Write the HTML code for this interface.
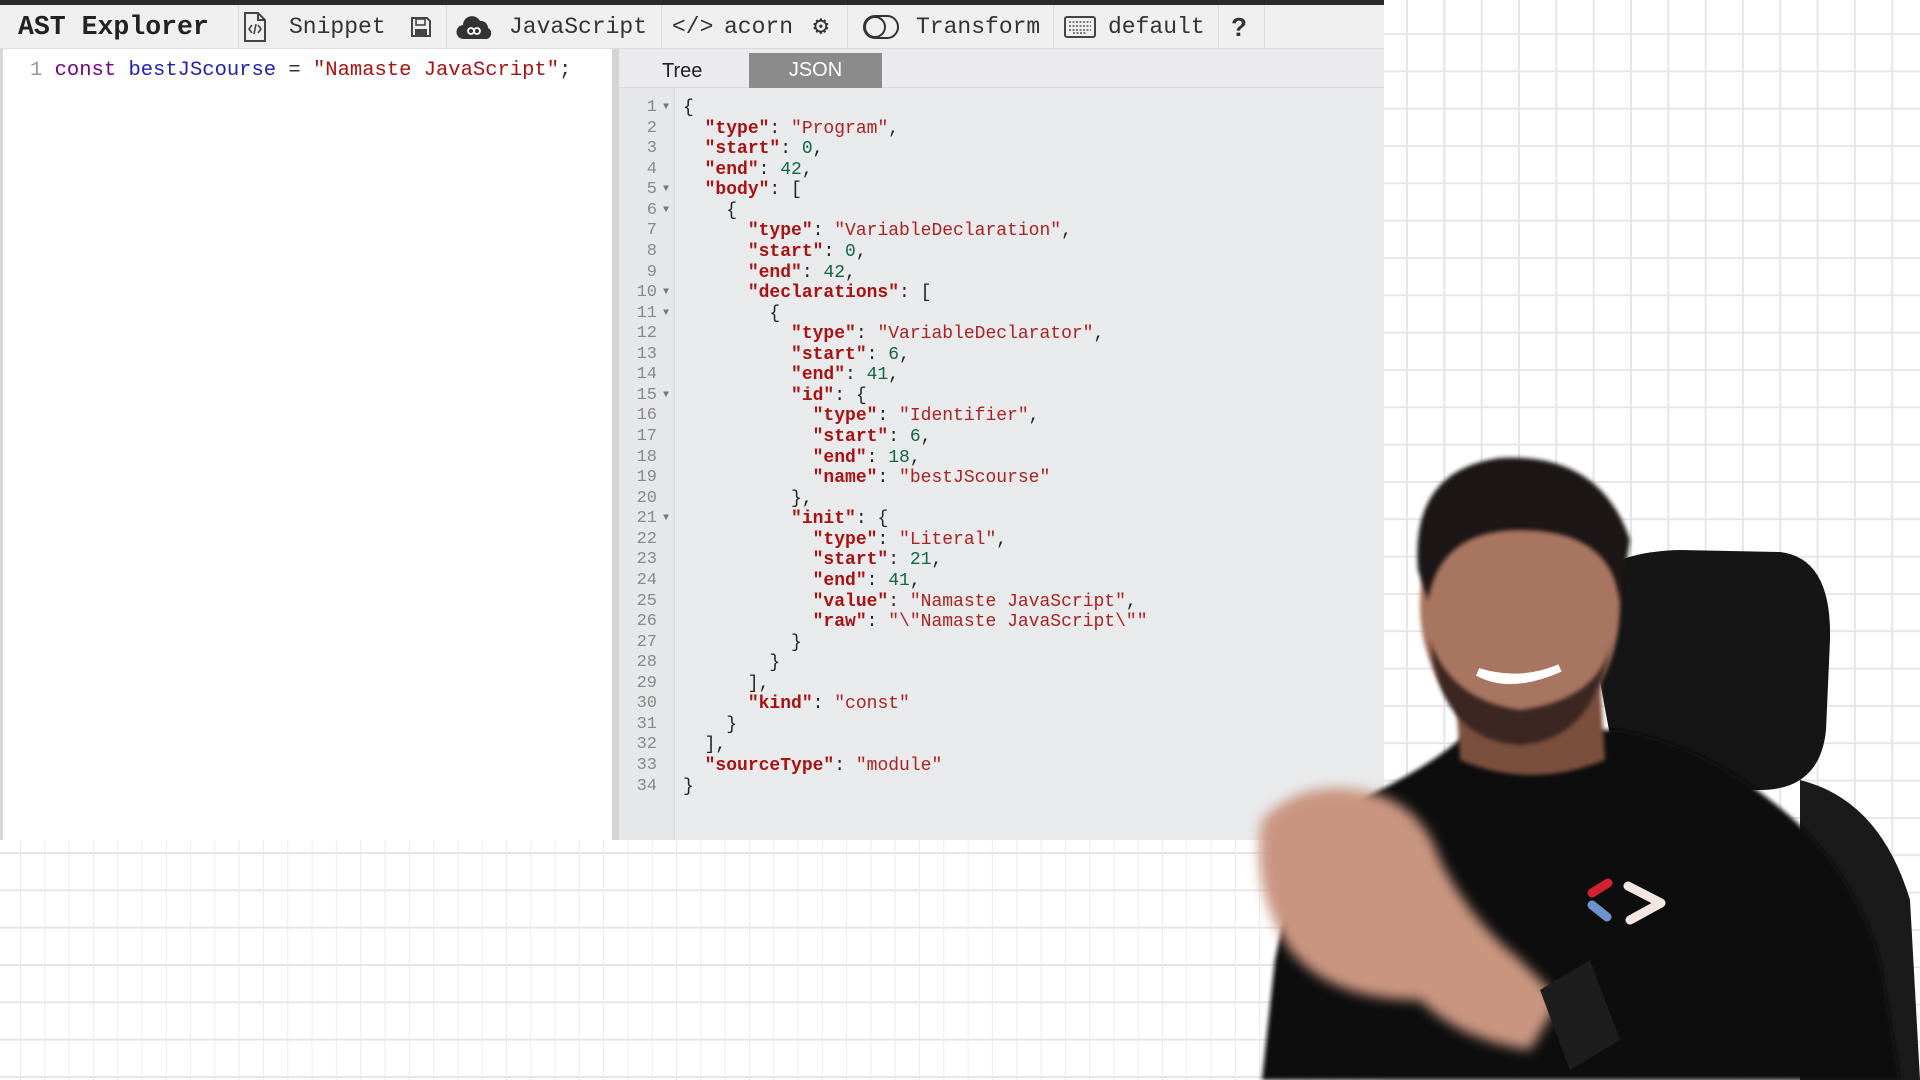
<!DOCTYPE html>
<html><head><meta charset="utf-8"><style>
*{margin:0;padding:0;box-sizing:border-box}
body{width:1920px;height:1080px;overflow:hidden;position:relative;background:#fff;font-family:"Liberation Mono",monospace}
.gridR{position:absolute;left:1384px;top:0;width:536px;height:1080px;
background-image:linear-gradient(to right,#e6e6e8 2px,transparent 2px),linear-gradient(to bottom,#e6e6e8 2px,transparent 2px);
background-size:37.33px 37.33px;background-position:22px 33px}
.gridB{position:absolute;left:0;top:840px;width:1384px;height:240px;
background-image:linear-gradient(to right,#ececee 1px,transparent 1px),linear-gradient(to bottom,#e6e6e8 2px,transparent 2px);
background-size:24.3px 37.33px;background-position:20px 12px}
.topbar{position:absolute;left:0;top:0;width:1384px;height:5px;background:#2c2c2c}
.tool{position:absolute;left:0;top:5px;width:1384px;height:44px;background:#efefef;border-bottom:1px solid #dcdcdc}
.t{position:absolute;top:0;line-height:44px;font-size:23px;color:#333;white-space:nowrap}
.sep{position:absolute;top:0;width:1px;height:44px;background:#dcdcdc}
.editor{position:absolute;left:0;top:49px;width:612px;height:791px;background:#fff;border-left:3px solid #d8d8d8}
.div{position:absolute;left:612px;top:49px;width:7px;height:791px;background:#d4d4d6}
.panel{position:absolute;left:619px;top:49px;width:765px;height:791px;background:#e9eaec}
.tabs{position:absolute;left:0;top:0;width:765px;height:39px;border-bottom:1px solid #dadadc;background:#ebebed}
.json{position:absolute;left:130px;top:4px;width:133px;height:35px;background:#8b8b8b;color:#fff;font-family:"Liberation Sans",sans-serif;font-size:20px;text-align:center;line-height:35px}
.tree{position:absolute;left:43px;top:5px;line-height:35px;font-family:"Liberation Sans",sans-serif;font-size:20px;color:#222}
.gut{position:absolute;left:0;top:39px;width:56px;height:752px;border-right:1px solid #d6d6d8;background:#e6e7e9}
pre{font-family:"Liberation Mono",monospace}
.ln{position:absolute;left:0;top:49px;width:38px;text-align:right;font-size:17px;line-height:20.56px;color:#888}
.ar{position:absolute;left:44px;top:49px;font-size:10px;line-height:20.56px;color:#777}
.code{position:absolute;left:64px;top:49px;font-size:18px;line-height:20.56px;color:#222}
.k{color:#a11;font-weight:bold}.s{color:#a22}.n{color:#164}
</style></head><body>
<div class="gridR"></div>
<div class="gridB"></div>
<div class="topbar"></div>
<div class="tool">
 <div class="t" style="left:18px;font-weight:bold;font-size:26.5px;color:#222">AST Explorer</div>
 <div class="sep" style="left:238px"></div>
 <svg style="position:absolute;left:242px;top:6px" width="26" height="32" viewBox="0 0 26 32"><path d="M3 2h13l7 7v21H3z M16 2v7h7" fill="none" stroke="#444" stroke-width="2"/><path d="M10 14l-3 4 3 4M16 14l3 4-3 4M14 13l-2 10" fill="none" stroke="#444" stroke-width="1.6"/></svg>
 <div class="t" style="left:289px">Snippet</div>
 <svg style="position:absolute;left:410px;top:11px" width="22" height="22" viewBox="0 0 22 22"><path d="M2 2h15l3 3v15H2z" fill="none" stroke="#444" stroke-width="2"/><rect x="6" y="3" width="9" height="6" fill="none" stroke="#444" stroke-width="1.6"/><rect x="5" y="13" width="12" height="6" fill="#444"/></svg>
 <div class="sep" style="left:446px"></div>
 <svg style="position:absolute;left:456px;top:8px" width="38" height="28" viewBox="0 0 38 28"><path d="M8 26a7 7 0 0 1-1-14a9 9 0 0 1 17-4a7 7 0 0 1 8 7a6 6 0 0 1-1 11z" fill="#333"/><path d="M12 18a3 3 0 1 1 6 0a3 3 0 1 1 6 0a3 3 0 1 1-6 0a3 3 0 1 1-6 0" fill="none" stroke="#fff" stroke-width="1.8"/></svg>
 <div class="t" style="left:509px">JavaScript</div>
 <div class="sep" style="left:661px"></div>
 <div class="t" style="left:672px">&lt;/&gt;</div>
 <div class="t" style="left:724px">acorn</div>
 <div class="t" style="left:813px;font-size:26px">&#9881;</div>
 <div class="sep" style="left:847px"></div>
 <svg style="position:absolute;left:862px;top:9px" width="38" height="26" viewBox="0 0 38 26"><rect x="2" y="2" width="34" height="22" rx="11" fill="none" stroke="#333" stroke-width="2"/><circle cx="13" cy="13" r="10" fill="none" stroke="#333" stroke-width="2"/></svg>
 <div class="t" style="left:916px">Transform</div>
 <div class="sep" style="left:1053px"></div>
 <svg style="position:absolute;left:1064px;top:11px" width="32" height="22" viewBox="0 0 32 22"><rect x="1" y="1" width="30" height="20" rx="2" fill="none" stroke="#444" stroke-width="2"/><path d="M5 6h22M5 10h22M5 14h22M9 17h14" stroke="#555" stroke-width="1.5" stroke-dasharray="2 1.5"/></svg>
 <div class="t" style="left:1108px">default</div>
 <div class="sep" style="left:1218px"></div>
 <div class="t" style="left:1231px;font-weight:bold;font-family:'Liberation Sans',sans-serif;font-size:26px">?</div>
 <div class="sep" style="left:1264px"></div>
</div>
<div class="editor">
 <pre style="position:absolute;left:27px;top:10px;font-size:20.5px;line-height:24px;color:#333"><span style="color:#999">1</span> <span style="color:#708">const</span> <span style="color:#22a">bestJScourse</span> = <span style="color:#a11">"Namaste JavaScript"</span>;</pre>
</div>
<div class="div"></div>
<div class="panel">
 <div class="tabs"><div class="tree">Tree</div><div class="json">JSON</div></div>
 <div class="gut"></div>
<pre class="ln">1
2
3
4
5
6
7
8
9
10
11
12
13
14
15
16
17
18
19
20
21
22
23
24
25
26
27
28
29
30
31
32
33
34</pre>
<pre class="ar">▼



▼
▼



▼
▼



▼





▼</pre>
<pre class="code">{
  <span class="k">"type"</span>: <span class="s">"Program"</span>,
  <span class="k">"start"</span>: <span class="n">0</span>,
  <span class="k">"end"</span>: <span class="n">42</span>,
  <span class="k">"body"</span>: [
    {
      <span class="k">"type"</span>: <span class="s">"VariableDeclaration"</span>,
      <span class="k">"start"</span>: <span class="n">0</span>,
      <span class="k">"end"</span>: <span class="n">42</span>,
      <span class="k">"declarations"</span>: [
        {
          <span class="k">"type"</span>: <span class="s">"VariableDeclarator"</span>,
          <span class="k">"start"</span>: <span class="n">6</span>,
          <span class="k">"end"</span>: <span class="n">41</span>,
          <span class="k">"id"</span>: {
            <span class="k">"type"</span>: <span class="s">"Identifier"</span>,
            <span class="k">"start"</span>: <span class="n">6</span>,
            <span class="k">"end"</span>: <span class="n">18</span>,
            <span class="k">"name"</span>: <span class="s">"bestJScourse"</span>
          },
          <span class="k">"init"</span>: {
            <span class="k">"type"</span>: <span class="s">"Literal"</span>,
            <span class="k">"start"</span>: <span class="n">21</span>,
            <span class="k">"end"</span>: <span class="n">41</span>,
            <span class="k">"value"</span>: <span class="s">"Namaste JavaScript"</span>,
            <span class="k">"raw"</span>: <span class="s">"\"Namaste JavaScript\""</span>
          }
        }
      ],
      <span class="k">"kind"</span>: <span class="s">"const"</span>
    }
  ],
  <span class="k">"sourceType"</span>: <span class="s">"module"</span>
}</pre>
</div>
<svg style="position:absolute;left:0;top:0" width="1920" height="1080" viewBox="0 0 1920 1080">
 <defs><filter id="b"><feGaussianBlur stdDeviation="6"/></filter><filter id="b2"><feGaussianBlur stdDeviation="2"/></filter></defs>
 <path d="M1585 600 Q1595 552 1680 550 L1780 552 Q1832 558 1830 640 L1826 730 Q1820 790 1760 790 L1620 790 Z" fill="#151515"/>
 <path d="M1800 780 Q1880 800 1910 900 L1920 1080 L1800 1080 Z" fill="#1a1a1a"/>
 <path d="M1262 1080 L1275 960 Q1300 830 1380 790 Q1440 760 1470 730 L1620 730 Q1700 745 1770 800 Q1850 860 1880 960 L1900 1080 Z" fill="#0f0f0f" filter="url(#b2)"/>
 <path d="M1455 680 L1600 680 L1605 760 Q1530 790 1460 760 Z" fill="#7a4f3d" filter="url(#b2)"/>
 <ellipse cx="1520" cy="605" rx="100" ry="130" fill="#a87560" filter="url(#b2)"/>
 <path d="M1430 640 Q1440 740 1520 745 Q1595 740 1612 640 Q1600 700 1520 710 Q1450 700 1430 640Z" fill="#3a2620" filter="url(#b2)"/>
 <path d="M1418 570 Q1410 470 1500 458 Q1600 452 1630 540 L1620 600 Q1610 530 1520 530 Q1440 530 1428 600 Z" fill="#1c1412" filter="url(#b2)"/>
 <path d="M1478 672 Q1510 690 1560 668 Q1520 685 1478 672Z" fill="#f2f0ee" stroke="#fff" stroke-width="8"/>
 <path d="M1262 820 Q1300 780 1360 790 Q1420 800 1440 860 Q1470 920 1520 960 L1560 1000 L1530 1050 Q1460 1040 1420 1000 Q1330 1000 1290 950 Q1250 890 1262 820Z" fill="#c99580" filter="url(#b)"/>
 <path d="M1540 990 L1590 960 L1620 1040 L1570 1070 Z" fill="#1d1d1d"/>
 <path d="M1608 883 L1592 893" stroke="#d42030" stroke-width="9" stroke-linecap="round"/>
 <path d="M1592 905 L1607 917" stroke="#6d92cc" stroke-width="9" stroke-linecap="round"/>
 <path d="M1628 886 L1661 903 L1630 920" fill="none" stroke="#f3e6e2" stroke-width="9" stroke-linecap="round" stroke-linejoin="round"/>
</svg>
</body></html>
